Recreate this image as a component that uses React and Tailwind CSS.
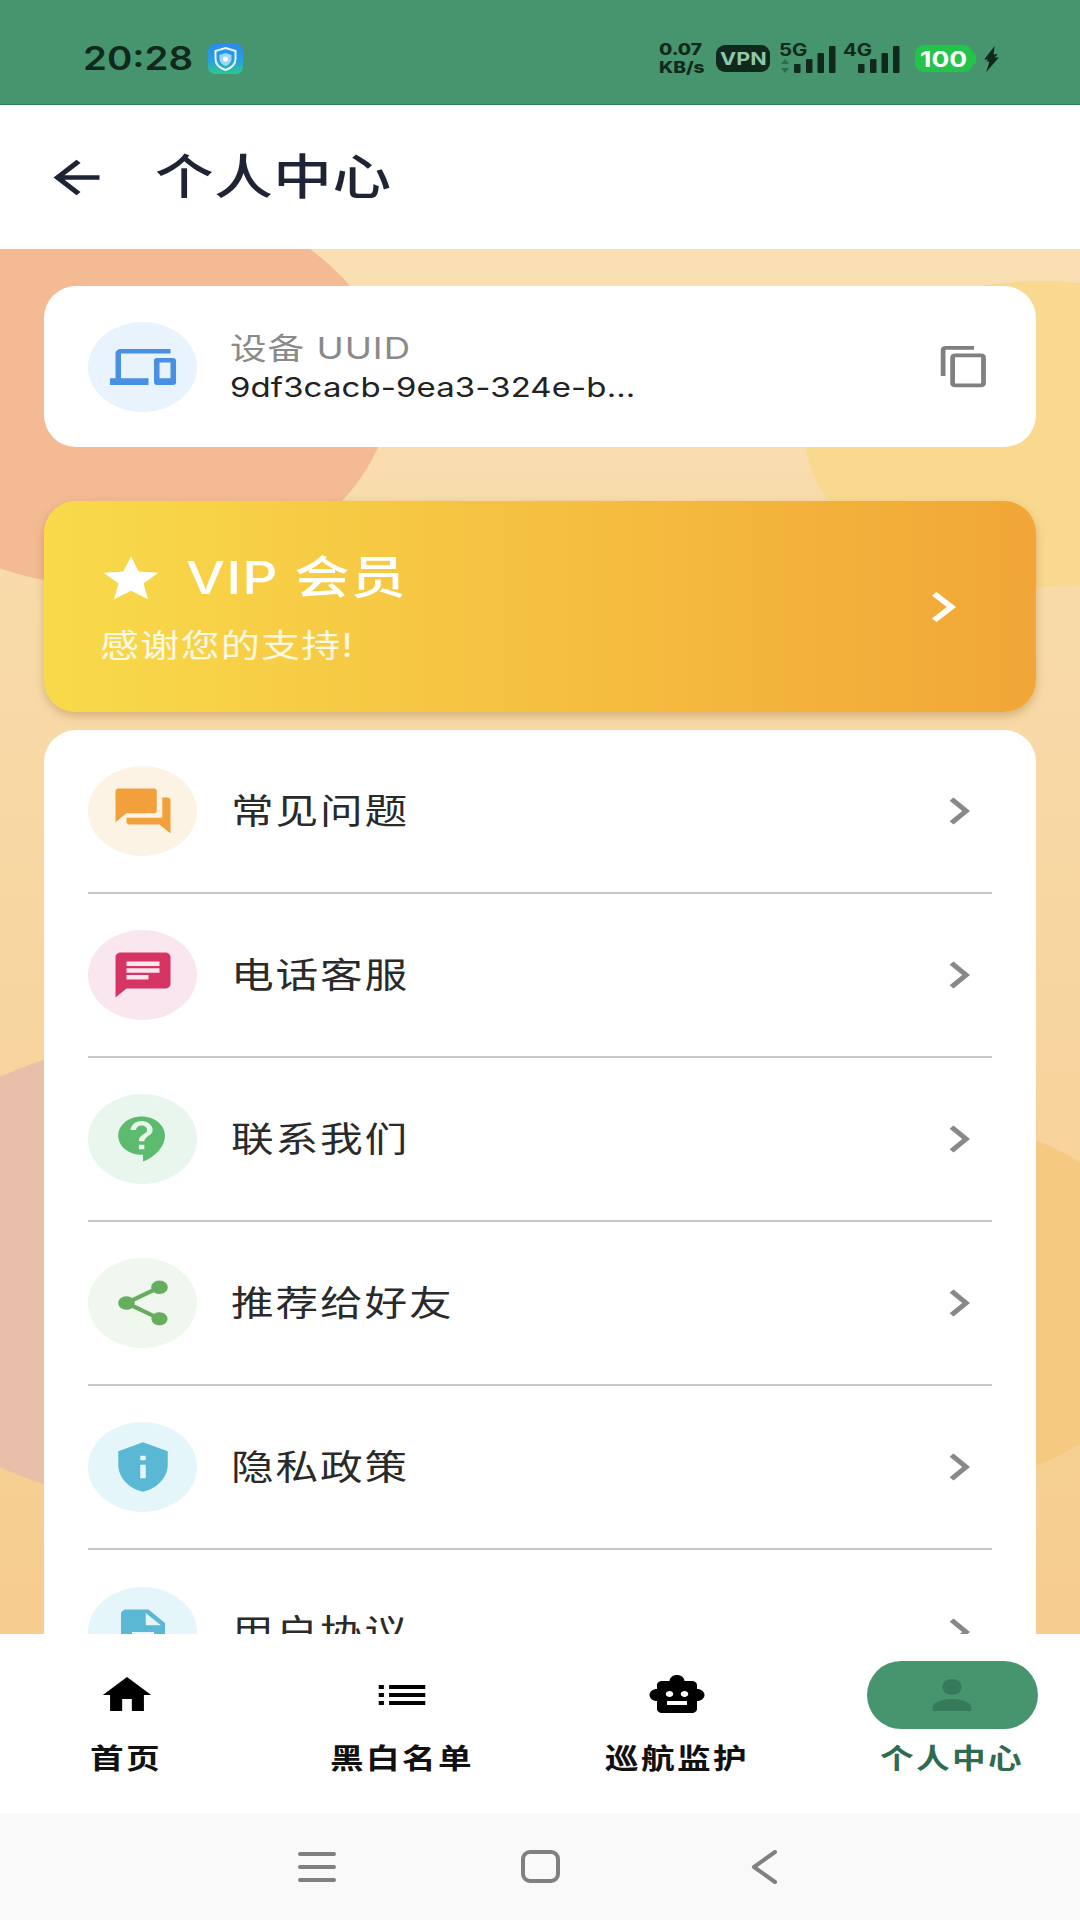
const menu = [
  { label: "常见问题", bg: "bg-[#fdf3e5]", fill: "fill-[#f2a03c]", d: "M21 6h-2v9H6v2c0 .55.45 1 1 1h11l4 4V7c0-.55-.45-1-1-1zm-4 6V3c0-.55-.45-1-1-1H3c-.55 0-1 .45-1 1v14l4-4h10c.55 0 1-.45 1-1z" },
  { label: "电话客服", bg: "bg-[#f9e6ee]", fill: "fill-[#d63564]", d: "M20 2H4c-1.1 0-2 .9-2 2v18l4-4h14c1.1 0 2-.9 2-2V4c0-1.1-.9-2-2-2zM6 9h12v2H6V9zm8 5H6v-2h8v2zm4-6H6V6h12v2z" },
  { label: "联系我们", bg: "bg-[#e8f6ee]", fill: "fill-[#5dbb6f]", d: "M11.5 2C6.81 2 3 5.81 3 10.5S6.81 19 11.5 19h.5v3c4.86-2.34 8-7 8-11.5C20 5.81 16.19 2 11.5 2zm1 14.5h-2v-2h2v2zm0-3.5h-2c0-3.25 3-3 3-5 0-1.1-.9-2-2-2s-2 .9-2 2h-2c0-2.21 1.79-4 4-4s4 1.79 4 4c0 2.5-3 2.75-3 5z" },
  { label: "推荐给好友", bg: "bg-[#eff7ee]", fill: "fill-[#66ad5e]", d: "M18 16.08c-.76 0-1.44.3-1.96.77L8.91 12.7c.05-.23.09-.46.09-.7s-.04-.47-.09-.7l7.05-4.11c.54.5 1.25.81 2.04.81 1.66 0 3-1.34 3-3s-1.34-3-3-3-3 1.34-3 3c0 .24.04.47.09.7L8.04 9.81C7.5 9.31 6.79 9 6 9c-1.66 0-3 1.34-3 3s1.34 3 3 3c.79 0 1.5-.31 2.04-.81l7.12 4.16c-.05.21-.08.43-.08.65 0 1.61 1.31 2.92 2.92 2.92 1.61 0 2.92-1.31 2.92-2.92s-1.31-2.92-2.92-2.92z" },
  { label: "隐私政策", bg: "bg-[#e5f6fa]", fill: "fill-[#5bb8d4]", d: "M12 1L3 5v6c0 5.55 3.84 10.74 9 12 5.16-1.26 9-6.45 9-12V5l-9-4zm-1 6h2v2h-2V7zm0 4h2v6h-2v-6z" },
  { label: "用户协议", bg: "bg-[#e5f6fa]", fill: "fill-[#5bb8d4]", d: "M14 2H6c-1.1 0-1.99.9-1.99 2L4 20c0 1.1.89 2 1.99 2H18c1.1 0 2-.9 2-2V8l-6-6zm2 16H8v-2h8v2zm0-4H8v-2h8v2zm-3-5V3.5L18.5 9H13z" },
];

const tabs = [
  { label: "首页", d: "M10 20v-6h4v6h5v-8h3L12 3 2 12h3v8z", w: "w-[58px]" },
  { label: "黑白名单", d: "M3 13h2v-2H3v2zm0 4h2v-2H3v2zm0-8h2V7H3v2zm4 4h14v-2H7v2zm0 4h14v-2H7v2zM7 7v2h14V7H7z", w: "w-[62px]" },
  { label: "巡航监护", d: "M20 9V7c0-1.1-.9-2-2-2h-3c0-1.66-1.34-3-3-3S9 3.34 9 5H6c-1.1 0-2 .9-2 2v2c-1.66 0-3 1.34-3 3s1.34 3 3 3v4c0 1.1.9 2 2 2h12c1.1 0 2-.9 2-2v-4c1.66 0 3-1.34 3-3s-1.34-3-3-3zM7.5 11.5c0-.83.67-1.5 1.5-1.5s1.5.67 1.5 1.5S9.83 13 9 13s-1.5-.67-1.5-1.5zM16 17H8v-2h8v2zm-1-4c-.83 0-1.5-.67-1.5-1.5S14.17 10 15 10s1.5.67 1.5 1.5S15.83 13 15 13z", w: "w-[60px]" },
];

const CHEVRON = "M10 6L8.59 7.41 13.17 12l-4.58 4.59L10 18l6-6z";

// the whole screenshot is stretched sideways, so icons are drawn non-uniform
function Icon({ d, className }) {
  return (
    <svg viewBox="0 0 24 24" preserveAspectRatio="none" className={className}>
      <path d={d} />
    </svg>
  );
}

function Signal({ label, arrows }) {
  return (
    <div className="relative w-[57px] h-[30px]">
      <span className="absolute left-0 top-[-1px] text-[17px] leading-[15px] font-bold text-[#10291c] origin-left scale-x-[1.2]">{label}</span>
      <svg viewBox="0 0 57 30" className="w-[57px] h-[30px] fill-[#10291c]">
        {arrows && <path d="M6 15l4 5H2zM6 29l-4-5h8z" className="fill-[#2f6b50]" />}
        <rect x="15" y="20" width="6.5" height="9" rx="1" />
        <rect x="27" y="15" width="6.5" height="14" rx="1" />
        <rect x="38.5" y="9" width="6.5" height="20" rx="1" />
        <rect x="50" y="2" width="6.5" height="27" rx="1" />
      </svg>
    </div>
  );
}

function StatusBar() {
  return (
    <div className="h-[105px] shrink-0 bg-[#46956e] flex items-center justify-between pl-[83px] pr-[80px] pt-[13px] border-b border-[#2f7d58]">
      <div className="flex items-center">
        <span className="w-[125px] text-[32px] leading-none font-semibold text-[#10291c] origin-left scale-x-[1.2] font-['Inter',sans-serif]">20:28</span>
        <svg viewBox="0 0 35 30" className="w-[35px] h-[30px]">
          <defs>
            <linearGradient id="appIcon" x1="0" y1="0" x2="0" y2="1">
              <stop offset="0" stopColor="#2a8cf0" />
              <stop offset="0.55" stopColor="#2a9ee0" />
              <stop offset="1" stopColor="#2cc98a" />
            </linearGradient>
          </defs>
          <rect width="35" height="30" rx="7" fill="url(#appIcon)" />
          <path d="M17.5 4l10 3v8c0 5-4 9-10 11-6-2-10-6-10-11V7z" fill="none" stroke="#e6f6ff" strokeWidth="2" />
          <path d="M17.5 9l6 2v4c0 3-2.500 5.500-6 7-3.500-1.500-6-4-6-7v-4z" fill="#9fd8f5" />
          <circle cx="17.500" cy="15" r="2.500" fill="#ffffff" />
        </svg>
      </div>
      <div className="flex items-center">
        <div className="w-[44px] flex flex-col gap-[5px] text-[16px] leading-[13px] font-extrabold text-[#10291c] mr-[13px] whitespace-nowrap">
          <span className="origin-left scale-x-[1.2]">0.07</span>
          <span className="origin-left scale-x-[1.2]">KB/s</span>
        </div>
        <div className="w-[54px] h-[27px] mr-[9px] rounded-[9px] bg-[#10291c] flex items-center justify-center">
          <span className="text-[18px] leading-none font-bold text-[#8fc5a8] scale-x-[1.2]">VPN</span>
        </div>
        <div className="mr-[7px]"><Signal label="5G" arrows /></div>
        <div className="mr-[15px]"><Signal label="4G" /></div>
        <div className="relative w-[58px] h-[27px] mr-[10px] rounded-[9px] bg-[#22c44a] flex items-center justify-center">
          <span className="text-[22px] leading-none font-bold text-white scale-x-[1.2]">100</span>
          <div className="absolute right-[-3px] top-[8px] w-[3px] h-[11px] rounded-r-[2px] bg-[#22c44a]" />
        </div>
        <svg viewBox="0 0 16 25" className="w-[17px] h-[26px] fill-[#10291c]">
          <path d="M11 0L1 13h4l-2 2h3L3 25l12-14h-4l3-3h-4z" />
        </svg>
      </div>
    </div>
  );
}

function AppBar() {
  return (
    <div className="h-[144px] shrink-0 bg-white flex items-center pl-[42px]">
      <Icon d="M20 11H7.830l5.590-5.590L12 4l-8 8 8 8 1.410-1.410L7.830 13H20v-2z" className="w-[69px] h-[53px] fill-[#1e2433]" />
      <h1 className="ml-[44px] text-[48px] leading-none font-medium text-[#1e2433] tracking-[0.5px] origin-left scale-x-[1.22]">个人中心</h1>
    </div>
  );
}

function Backdrop() {
  return (
    <>
      <div className="absolute left-[-158px] top-[-58px] w-[548px] h-[396px] rounded-[50%] bg-[#f4ba94]" />
      <div className="absolute left-[805px] top-[32px] w-[470px] h-[306px] rounded-[50%] bg-[#f9d98f]" />
      <div className="absolute left-[-145px] top-[793px] w-[616px] h-[460px] rounded-[50%] bg-[#e8bfa8]" />
      <div className="absolute left-[609px] top-[864px] w-[564px] h-[380px] rounded-[50%] bg-[#f5ca80]" />
    </>
  );
}

function DeviceCard() {
  return (
    <div className="bg-white rounded-[32px] h-[161px] flex items-center pl-[44px] pr-[43px]">
      <div className="w-[109px] h-[90px] rounded-[50%] bg-[#e8f3fd] flex items-center justify-center shrink-0">
        <Icon d="M4 6h18V4H4c-1.100 0-2 .900-2 2v11H0v3h14v-3H4V6zm19 2h-6c-.550 0-1 .450-1 1v10c0 .550.450 1 1 1h6c.550 0 1-.450 1-1V9c0-.550-.450-1-1-1zm-1 9h-4v-7h4v7z" className="w-[66px] h-[54px] fill-[#4a90e2]" />
      </div>
      <div className="ml-[33px] flex-1 flex flex-col pt-[3px]">
        <span className="text-[30px] leading-[39px] text-[#8a8a8a] tracking-[0.8px] origin-left scale-x-[1.22]">设备 UUID</span>
        <span className="text-[27px] leading-[39px] text-[#222222] tracking-[0.1px] origin-left scale-x-[1.22]">9df3cacb-9ea3-324e-b...</span>
      </div>
      <Icon d="M16 1H4c-1.100 0-2 .900-2 2v14h2V3h12V1zm3 4H8c-1.100 0-2 .900-2 2v14c0 1.100.900 2 2 2h11c1.100 0 2-.900 2-2V7c0-1.100-.900-2-2-2zm0 16H8V7h11v14z" className="w-[57px] h-[45px] fill-[#808080]" />
    </div>
  );
}

function VipCard() {
  return (
    <div className="mt-[54px] h-[211px] rounded-[32px] bg-gradient-to-r from-[#f8da4a] to-[#f1a637] shadow-[0_4px_10px_rgba(150,100,40,0.35)] flex items-center justify-between pl-[54px] pr-[54px]">
      <div className="flex flex-col">
        <div className="flex items-center">
          <Icon d="M12 17.270L18.180 21l-1.640-7.030L22 9.240l-7.190-.610L12 2 9.190 8.630 2 9.240l5.460 4.730L5.820 21z" className="w-[66px] h-[54px] fill-white" />
          <span className="ml-[22px] mb-[2px] text-[45px] leading-none font-medium text-white tracking-[1px] origin-left scale-x-[1.22] whitespace-nowrap">VIP 会员</span>
        </div>
        <span className="mt-[24px] ml-[2px] text-[32px] leading-none text-white/85 tracking-[1px] origin-left scale-x-[1.22]">感谢您的支持!</span>
      </div>
      <Icon d={CHEVRON} className="w-[78px] h-[60px] fill-white" />
    </div>
  );
}

function MenuList() {
  return (
    <div className="mt-[18px] bg-white rounded-t-[32px] px-[44px]">
      {menu.map((item, i) => (
        <div key={item.label} className={`h-[164px] flex items-center ${i < menu.length - 1 ? "border-b-2 border-[#c8c8cc]" : ""}`}>
          <div className={`w-[109px] h-[90px] rounded-[50%] flex items-center justify-center shrink-0 ${item.bg}`}>
            <Icon d={item.d} className={`w-[66px] h-[54px] ${item.fill}`} />
          </div>
          <span className="ml-[34px] pt-[1px] flex-1 text-[35px] leading-none text-[#2a2a2a] tracking-[1.5px] origin-left scale-x-[1.22]">{item.label}</span>
          <Icon d={CHEVRON} className="w-[66px] h-[54px] fill-[#888888]" />
        </div>
      ))}
    </div>
  );
}

function BottomNav() {
  return (
    <div className="h-[179px] shrink-0 bg-white flex justify-between pl-[41px] pr-[42px] pt-[27px]">
      {tabs.map((tab) => (
        <div key={tab.label} className="w-[171px] flex flex-col items-center">
          <div className="h-[68px] flex items-center justify-center">
            <Icon d={tab.d} className={`${tab.w} h-[48px] fill-black`} />
          </div>
          <span className="mt-[16px] text-[28px] leading-[28px] font-semibold text-[#111111] tracking-[2px] scale-x-[1.2]">{tab.label}</span>
        </div>
      ))}
      <div className="w-[171px] flex flex-col items-center">
        <div className="w-[171px] h-[68px] rounded-full bg-[#46956e] flex items-center justify-center">
          <Icon d="M12 12c2.210 0 4-1.790 4-4s-1.790-4-4-4-4 1.790-4 4 1.790 4 4 4zm0 2c-2.670 0-8 1.340-8 4v2h16v-2c0-2.660-5.330-4-8-4z" className="w-[58px] h-[48px] fill-[#357a5b]" />
        </div>
        <span className="mt-[16px] text-[28px] leading-[28px] font-semibold text-[#2f6b50] tracking-[2px] scale-x-[1.2]">个人中心</span>
      </div>
    </div>
  );
}

function SystemNav() {
  return (
    <div className="h-[107px] shrink-0 bg-[#f9f9f9] flex items-center justify-center gap-[184px]">
      <div className="w-[40px] flex flex-col items-center gap-[9px]">
        <div className="w-[38px] h-[4px] rounded-full bg-[#808080]" />
        <div className="w-[38px] h-[4px] rounded-full bg-[#808080]" />
        <div className="w-[38px] h-[4px] rounded-full bg-[#808080]" />
      </div>
      <div className="w-[39px] h-[33px] rounded-[9px] border-[4px] border-[#808080]" />
      <svg viewBox="0 0 40 34" className="w-[40px] h-[34px] fill-none stroke-[#808080] stroke-[4] [stroke-linecap:round] [stroke-linejoin:round]">
        <path d="M31 2L10 17l21 15" />
      </svg>
    </div>
  );
}

export default function App() {
  return (
    <div className="w-[1080px] h-[1920px] flex flex-col overflow-hidden bg-white font-['Inter','Noto_Sans_CJK_SC',sans-serif]">
      <StatusBar />
      <AppBar />
      <div className="relative flex-1 overflow-hidden bg-gradient-to-b from-[#f9dfb3] to-[#f6cd8e]">
        <Backdrop />
        <div className="relative px-[44px] pt-[37px]">
          <DeviceCard />
          <VipCard />
          <MenuList />
        </div>
      </div>
      <BottomNav />
      <SystemNav />
    </div>
  );
}
